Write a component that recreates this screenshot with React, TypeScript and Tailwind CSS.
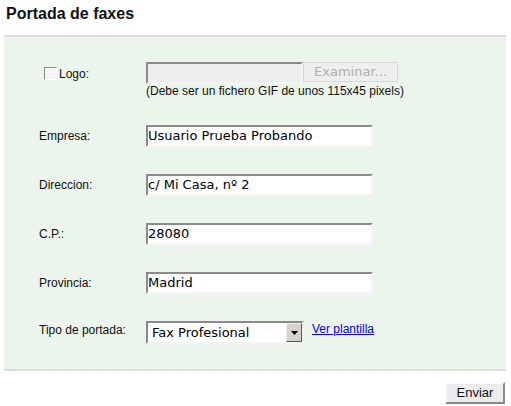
import React from "react";

const inset =
  "border-2 border-t-[#8a8a8a] border-l-[#8a8a8a] border-b-[#f4f4f4] border-r-[#f4f4f4]";

function TextInput({ value }: { value: string }) {
  return (
    <div
      className={`w-[227px] h-[22px] bg-white ${inset} flex items-center text-[13px] text-black whitespace-nowrap`}
      style={{ fontFamily: '"DejaVu Sans", sans-serif' }}
    >
      {value}
    </div>
  );
}

function Row({ label, children, className = "" }: { label: string; children: React.ReactNode; className?: string }) {
  return (
    <div className={`flex items-center ${className}`}>
      <div className="w-[107px] text-[12px] leading-[14px] text-[#111]">{label}</div>
      {children}
    </div>
  );
}

export default function App() {
  return (
    <div
      className="w-[511px] h-[406px] bg-white overflow-hidden relative"
      style={{ fontFamily: '"Liberation Sans", Arial, sans-serif' }}
    >
      <div className="h-[35px] pl-[6px] pt-[4px] text-[16px] leading-[19px] font-bold text-[#111]">
        Portada de faxes
      </div>
      <div className="ml-[4px] w-[502px] h-[336px] border-t-2 border-b-2 border-[#dcdcdc] bg-[#ebf5ec] pl-[35px] pt-[25px]">
        {/* Logo row */}
        <div className="flex items-start">
          <div className="w-[107px] h-[22px] flex items-center pl-[5px] pt-[1px]">
            <span className="w-[13px] h-[13px] border border-t-[#8a8a8a] border-l-[#8a8a8a] border-b-white border-r-white bg-[#f6f6f6] mr-[2px]" />
            <span className="text-[12px] leading-[14px] text-[#111]">Logo:</span>
          </div>
          <div className="flex flex-col">
            <div className="flex items-start">
              <div className={`w-[157px] h-[22px] bg-[#eeeeee] ${inset}`} />
              <div
                className="w-[95px] h-[20px] bg-[#efefef] border border-[#d8d8d8] flex items-center justify-center text-[13px] text-[#b0b0b0]"
                style={{ fontFamily: '"DejaVu Sans", sans-serif' }}
              >
                Examinar...
              </div>
            </div>
            <div className="text-[12px] leading-[14px] text-[#111] whitespace-nowrap">
              (Debe ser un fichero GIF de unos 115x45 pixels)
            </div>
          </div>
        </div>

        <Row label="Empresa:" className="mt-[27px]">
          <TextInput value="Usuario Prueba Probando" />
        </Row>
        <Row label="Direccion:" className="mt-[27px]">
          <TextInput value="c/ Mi Casa, nº 2" />
        </Row>
        <Row label="C.P.:" className="mt-[27px]">
          <TextInput value="28080" />
        </Row>
        <Row label="Provincia:" className="mt-[27px]">
          <TextInput value="Madrid" />
        </Row>

        <div className="flex items-start mt-[27px]">
          <div className="w-[107px] pt-[2px] text-[12px] leading-[14px] text-[#111]">Tipo de portada:</div>
          <div
            className={`w-[158px] h-[23px] bg-white ${inset} flex items-center justify-between text-[13px] text-black`}
            style={{ fontFamily: '"DejaVu Sans", sans-serif' }}
          >
            <span className="pl-[4px] pt-[1px]">Fax Profesional</span>
            <span className="w-[16px] h-[19px] bg-[#d6d3ce] border border-t-[#f0f0f0] border-l-[#f0f0f0] border-b-[#555] border-r-[#555] flex items-center justify-center">
              <svg width="7" height="4" viewBox="0 0 7 4">
                <polygon points="0,0 7,0 3.5,4" fill="#000" />
              </svg>
            </span>
          </div>
          <a
            href="#"
            className="ml-[8px] pt-[1px] text-[12px] leading-[14px] text-[#0000ee] underline"
          >
            Ver plantilla
          </a>
        </div>
      </div>
      <div className="flex justify-end pr-[6px] mt-[11px]">
        <div className="w-[60px] h-[22px] bg-[#ececec] border-2 border-t-[#fafafa] border-l-[#fafafa] border-b-[#8a8a8a] border-r-[#8a8a8a] flex items-center justify-center text-[13px] text-[#111]">
          Enviar
        </div>
      </div>
    </div>
  );
}
